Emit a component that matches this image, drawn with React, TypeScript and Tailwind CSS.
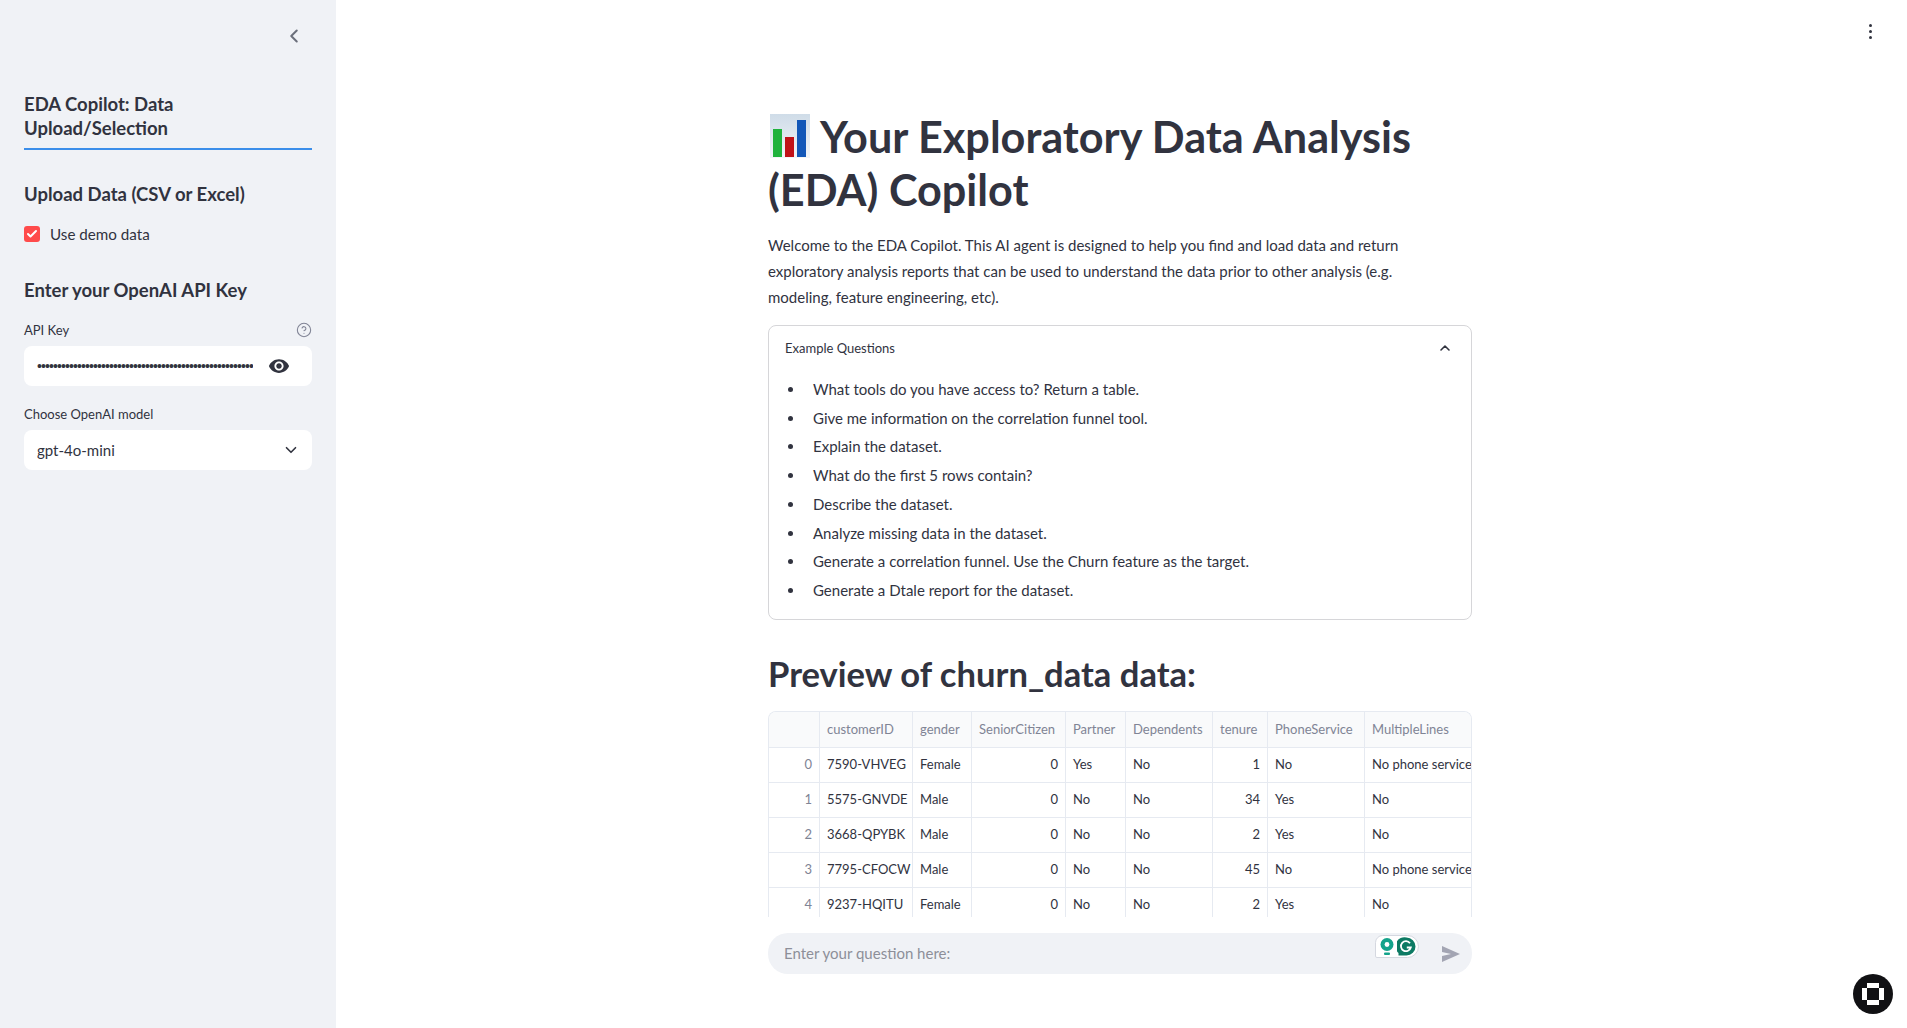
import { ChevronLeft, ChevronDown, ChevronUp, CircleHelp, Check } from "lucide-react";
import { MdVisibility } from "react-icons/md";

const questions = [
  "What tools do you have access to? Return a table.",
  "Give me information on the correlation funnel tool.",
  "Explain the dataset.",
  "What do the first 5 rows contain?",
  "Describe the dataset.",
  "Analyze missing data in the dataset.",
  "Generate a correlation funnel. Use the Churn feature as the target.",
  "Generate a Dtale report for the dataset.",
];

const columns = [
  { name: "", width: "w-[51px]" },
  { name: "customerID", width: "w-[93px]" },
  { name: "gender", width: "w-[59px]" },
  { name: "SeniorCitizen", width: "w-[94px]" },
  { name: "Partner", width: "w-[60px]" },
  { name: "Dependents", width: "w-[87px]" },
  { name: "tenure", width: "w-[55px]" },
  { name: "PhoneService", width: "w-[97px]" },
  { name: "MultipleLines", width: "w-[106px]" },
];

const rows = [
  ["0", "7590-VHVEG", "Female", "0", "Yes", "No", "1", "No", "No phone service"],
  ["1", "5575-GNVDE", "Male", "0", "No", "No", "34", "Yes", "No"],
  ["2", "3668-QPYBK", "Male", "0", "No", "No", "2", "Yes", "No"],
  ["3", "7795-CFOCW", "Male", "0", "No", "No", "45", "No", "No phone service"],
  ["4", "9237-HQITU", "Female", "0", "No", "No", "2", "Yes", "No"],
];

function ChartEmoji() {
  return (
    <svg width="40" height="44" viewBox="0 0 40 44" className="inline-block align-baseline ml-[2px] mr-[10px] -mb-[5px]">
      <defs>
        <linearGradient id="chartBg" x1="0" y1="0" x2="0" y2="1">
          <stop offset="0" stopColor="#cfdce8" />
          <stop offset="1" stopColor="#f2f5f8" />
        </linearGradient>
      </defs>
      <rect width="40" height="44" fill="url(#chartBg)" />
      <rect x="3" y="15" width="9" height="28" fill="#1fb23c" />
      <rect x="15" y="23" width="9" height="20" fill="#c01218" />
      <rect x="27" y="6" width="9" height="37" fill="#1257b8" />
    </svg>
  );
}

export default function App() {
  return (
    <div className="relative flex h-screen overflow-hidden bg-white text-[#31333f] font-['Lato','Noto_Sans',sans-serif]">
      <aside className="w-[336px] shrink-0 bg-[#f0f2f6] px-6 pt-[25px]">
        <div className="flex justify-end pr-[7px] text-[#6b6f7b]">
          <ChevronLeft size={22} strokeWidth={2.2} />
        </div>
        <h2 className="mt-[45px] text-[18.5px] leading-[24px] font-bold">
          EDA Copilot: Data Upload/Selection
        </h2>
        <div className="mt-[8px] h-[2px] bg-[#3b8eea]" />
        <h3 className="mt-[32px] text-[18.5px] leading-[24px] font-bold">Upload Data (CSV or Excel)</h3>
        <label className="mt-[20px] flex items-center gap-[10px] text-[15.2px] leading-[16px]">
          <span className="flex h-4 w-4 items-center justify-center rounded-[3px] bg-[#ff4b4b] text-white">
            <Check size={12} strokeWidth={4} />
          </span>
          Use demo data
        </label>
        <h3 className="mt-[36px] text-[18.5px] leading-[24px] font-bold">Enter your OpenAI API Key</h3>
        <div className="mt-[18px] flex items-center justify-between text-[13px] leading-[20px]">
          <span>API Key</span>
          <CircleHelp size={16} strokeWidth={1.6} className="text-[#808495]" />
        </div>
        <div className="mt-[6px] flex h-10 items-center rounded-lg bg-white pl-[13px] pr-[22px]">
          <span className="w-[216px] overflow-hidden whitespace-nowrap font-['Liberation_Sans',sans-serif] text-[14px] leading-none tracking-[-0.9px]">
            {"•".repeat(54)}
          </span>
          <MdVisibility size={22} className="ml-auto text-[#31333f]" />
        </div>
        <div className="mt-[18px] text-[13px] leading-[20px]">Choose OpenAI model</div>
        <div className="mt-[6px] flex h-10 items-center justify-between rounded-lg bg-white pl-[13px] pr-[12px] text-[15px]">
          <span>gpt-4o-mini</span>
          <ChevronDown size={18} strokeWidth={2.2} />
        </div>
      </aside>

      <main className="flex-1 pl-[432px]">
        <div className="w-[704px] pt-[110px]">
          <h1 className="text-[43.2px] leading-[53px] font-bold whitespace-nowrap">
            <ChartEmoji />Your Exploratory Data Analysis
            <br />
            (EDA) Copilot
          </h1>
          <p className="mt-[16px] max-w-[660px] text-[15px] leading-[26px]">
            Welcome to the EDA Copilot. This AI agent is designed to help you find and load data and return
            exploratory analysis reports that can be used to understand the data prior to other analysis (e.g.
            modeling, feature engineering, etc).
          </p>

          <section className="mt-[15px] h-[295px] rounded-lg border border-[#d6d6d9] px-4">
            <div className="flex h-[46px] items-center justify-between text-[13px]">
              <span>Example Questions</span>
              <ChevronUp size={16} strokeWidth={2.4} className="mr-[2px] -mt-[2px]" />
            </div>
            <ul className="mt-[3px] list-disc pl-[20px] text-[15px] leading-[28.7px]">
              {questions.map((q) => (
                <li key={q} className="pl-[8px]">{q}</li>
              ))}
            </ul>
          </section>

          <h2 className="mt-[30px] text-[34.6px] leading-[48px] font-bold">Preview of churn_data data:</h2>

          <div className="mt-[13px] h-[206px] overflow-hidden rounded-t-lg border-x border-t border-[#e6eaf1]">
            <div className="flex h-[36px] border-b border-[#e6eaf1] bg-[#f9fafb] text-[13px] text-[#808495]">
              {columns.map((c) => (
                <div
                  key={c.name || "index"}
                  className={`${c.width} shrink-0 border-r border-[#e6eaf1] px-[7px] leading-[35px] last:border-r-0 whitespace-nowrap overflow-hidden`}
                >
                  {c.name}
                </div>
              ))}
            </div>
            {rows.map((row) => (
              <div key={row[0]} className="flex h-[35px] border-b border-[#e6eaf1] text-[13px]">
                {row.map((cell, i) => (
                  <div
                    key={i}
                    className={`${columns[i].width} shrink-0 border-r border-[#e6eaf1] px-[7px] leading-[33px] last:border-r-0 whitespace-nowrap overflow-hidden ${
                      i === 0 ? "text-right text-[#808495]" : i === 3 || i === 6 ? "text-right" : ""
                    }`}
                  >
                    {cell}
                  </div>
                ))}
              </div>
            ))}
          </div>

          <div className="relative mt-[16px] flex h-[41px] items-center justify-between rounded-[20px] bg-[#f0f2f6] pl-4 pr-[11px] text-[15px] text-[#8d8f99]">
            <span>Enter your question here:</span>
            <svg width="20" height="18" viewBox="0 0 20 18">
              <path d="M1 1 L19 9 L1 17 L1 11 L10 9 L1 7 Z" fill="#a3a5b3" />
            </svg>
            <div className="absolute right-[53px] top-[2px] flex h-[23px] w-[44px] items-center gap-[2px] rounded-tl-[8px] rounded-r-[12px] rounded-bl-[2px] border border-[#d5d8e0] bg-white pl-[3px]">
              <svg width="16" height="20" viewBox="0 0 16 20">
                <circle cx="8" cy="7.5" r="6.5" fill="#14a38b" />
                <circle cx="8" cy="7.5" r="2.4" fill="#ffffff" />
                <rect x="5" y="15.5" width="6" height="2.5" rx="1" fill="#14a38b" />
              </svg>
              <svg width="19" height="19" viewBox="0 0 19 19">
                <path d="M9.5 0.5a9 9 0 0 1 0 18H1.5v-2.5A9 9 0 0 1 9.5 0.5z" fill="#0d7a63" />
                <path d="M13 6.2a5 5 0 1 0 0.8 4.3H9.8" fill="none" stroke="#ffffff" strokeWidth="1.8" />
              </svg>
            </div>
          </div>
        </div>
      </main>

      <div className="absolute right-[35px] top-[24px] flex flex-col gap-[3px]">
        <span className="h-[3px] w-[3px] rounded-full bg-[#31333f]" />
        <span className="h-[3px] w-[3px] rounded-full bg-[#31333f]" />
        <span className="h-[3px] w-[3px] rounded-full bg-[#31333f]" />
      </div>

      <div className="absolute bottom-[14px] right-[14px] h-10 w-10">
        <svg width="40" height="40" viewBox="0 0 40 40">
          <circle cx="20" cy="20" r="20" fill="#111114" />
          <path d="M14 9h12v5h5v12h-5v5H14v-5H9V14h5z" fill="#ffffff" />
          <rect x="14" y="14" width="12" height="12" fill="#111114" />
        </svg>
      </div>
    </div>
  );
}
